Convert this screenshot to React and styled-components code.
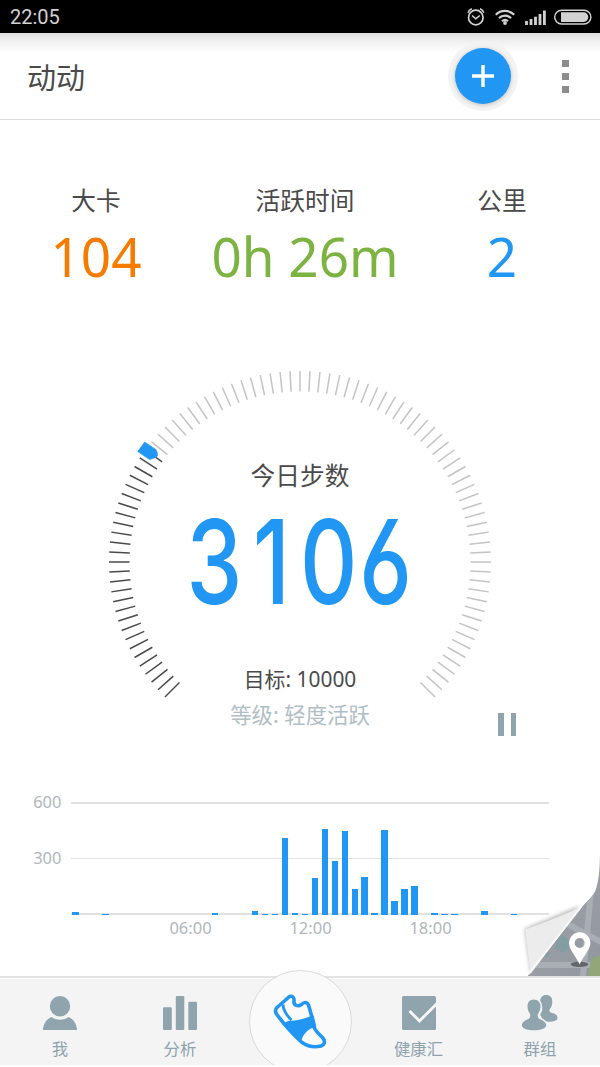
import React from 'react'
import styled, { createGlobalStyle } from 'styled-components'

const GlobalStyle = createGlobalStyle`
  * {
    box-sizing: border-box;
  }
  body {
    margin: 0;
    background-color: #fff;
    font-family: 'Noto Sans', 'Noto Sans CJK SC', sans-serif;
    color: #4a4a4a;
  }
`

/* styled-components */
const Screen = styled.div`
  position: relative;
  display: flex;
  flex-direction: column;
  width: 600px;
  height: 1067px;
  overflow: hidden;
  background-color: #fff;
`
const StatusBar = styled.div`
  display: flex;
  align-items: center;
  justify-content: space-between;
  height: 33px;
  padding: 1px 8px 0 10px;
  background-color: #000;
  color: #d2d2d2;
  font-family: Roboto, sans-serif;
  font-size: 20px;
  line-height: 32px;
`
const Header = styled.header`
  display: flex;
  align-items: center;
  height: 87px;
  padding: 0 31.5px 0 27px;
  border-bottom: 1px solid #dcdcdc;
  background: linear-gradient(#dedede, #f0f0f0 8px, #fff 20px);
`
const Title = styled.h1`
  flex: 1;
  margin: 0;
  padding-top: 4px;
  font-size: 29px;
  font-weight: 400;
  line-height: 40px;
`
const AddButton = styled.button`
  display: flex;
  align-items: center;
  justify-content: center;
  width: 56px;
  height: 56px;
  margin-right: 50.5px;
  padding: 0;
  border: 0;
  border-radius: 50%;
  background-color: #2196f3;
  box-shadow: 0 1px 4px 0 rgba(0, 0, 0, 0.22), 0 0 0 7px #f3f3f3;
`
const MenuButton = styled.div`
  display: flex;
  flex-direction: column;
  gap: 6px;
  padding-top: 1px;
`
const MenuDot = styled.span`
  width: 7px;
  height: 7px;
  background-color: #8c8c8c;
`
const Main = styled.main`
  display: flex;
  flex-direction: column;
  height: 856px;
`
const Stats = styled.section`
  display: grid;
  grid-template-columns: 192px 226px 168px;
  height: 250px;
  padding-top: 63px;
  text-align: center;
`
const StatLabel = styled.div`
  font-size: 24.7px;
  line-height: 36px;
`
const StatValue = styled.div`
  color: ${(props) => props.$color};
  font-size: 55.5px;
  line-height: 74px;
  transform: scaleX(0.955);
`
const Dial = styled.section`
  display: grid;
  height: 370px;
  justify-items: center;

  > * {
    grid-area: 1 / 1;
  }
`
const DialText = styled.div`
  display: flex;
  flex-direction: column;
  align-items: center;
  padding-top: 88px;
`
const DialTitle = styled.div`
  font-size: 24.7px;
  line-height: 36px;
`
const Steps = styled.div`
  display: grid;
  grid-template-columns: repeat(4, 75px);
  height: 150px;
  margin-top: -8px;
  color: #2196f3;
  font-family: Inter, Roboto, sans-serif;
  font-size: 117px;
  font-weight: 500;
  font-feature-settings: 'cv03';
  line-height: 151px;
  text-align: center;
  transform: scaleX(0.76);
`
const Goal = styled.div`
  margin-top: 25px;
  font-size: 20.9px;
  line-height: 36px;
`
const Level = styled.div`
  color: #b0bec5;
  font-size: 21.4px;
  line-height: 36px;
`
const PauseButton = styled.div`
  display: flex;
  gap: 7px;
  align-self: end;
  justify-self: end;
  margin: 0 84px 4px 0;
`
const PauseBar = styled.span`
  width: 5.5px;
  height: 23px;
  background-color: #90a4ae;
`
const Chart = styled.section`
  padding-top: 61px;
`
const ChartBody = styled.div`
  display: flex;
`
const AxisLabel = styled.span`
  color: #b0b7bb;
  font-size: 16.5px;
  line-height: 24px;
`
const YAxis = styled.div`
  display: flex;
  flex-direction: column;
  gap: 32px;
  width: 71px;
  height: 114px;
  padding-right: 9.5px;
  margin-top: -11px;
  text-align: right;
`
const Plot = styled.div`
  display: grid;
  width: 478px;
  height: 114px;

  > * {
    grid-area: 1 / 1;
    min-width: 0;
  }
`
const GridLines = styled.div`
  display: flex;
  flex-direction: column;
  justify-content: space-between;
  padding-top: 1px;
`
const GridLine = styled.span`
  height: ${(props) => props.$size}px;
  background-color: #e1e1e1;
`
const Bars = styled.div`
  display: flex;
  align-items: flex-end;
  padding-left: 1.4px;
`
const Bar = styled.span`
  flex: none;
  width: 6.4px;
  margin-right: 3.58px;
  background-color: #2196f3;
`
const XAxis = styled.div`
  display: flex;
  padding-left: 130.5px;
  margin-top: 1px;

  span {
    width: 120px;
    text-align: center;
  }
`
const MapCorner = styled.svg`
  position: absolute;
  right: 0;
  top: 840px;
`
const TabBar = styled.nav`
  display: grid;
  grid-template-columns: repeat(5, 1fr);
  height: 89px;
  border-top: 2px solid #e3e3e3;
  background-color: #f4f4f4;
  box-shadow: inset 0 1px 0 #fdfdfd;
`
const Tab = styled.div`
  display: flex;
  flex-direction: column;
  align-items: center;
  gap: 6px;
  padding-top: 18px;
  padding-right: ${(props) => props.$shift || 0}px;
  color: #8fa3ad;
  font-size: 16.4px;
  line-height: 26px;
`
const CenterTab = styled.div`
  height: 95px;
  margin-top: -8px;
  justify-self: center;
  overflow: hidden;
`
const ShoeButton = styled.div`
  width: 103px;
  height: 103px;
  border: 1px solid #d9d9d9;
  border-radius: 50%;
  background-color: #fafafa;
`

const stats = [
  { label: '大卡', value: '104', color: '#f57c00' },
  { label: '活跃时间', value: '0h 26m', color: '#7cb342' },
  { label: '公里', value: '2', color: '#2196f3' },
]

/* steps for every half hour of the day */
const steps = [
  16, 0, 0, 6, 0, 0, 0, 0, 0, 0, 0, 0,
  0, 0, 10, 0, 0, 0, 24, 6, 6, 415, 13, 8,
  200, 462, 291, 454, 138, 203, 11, 458, 74, 138, 157, 0,
  10, 6, 6, 0, 0, 24, 0, 0, 8, 0, 0, 0,
]

const total = '3106'

const ticks = Array.from({ length: 91 }, (_, i) => i)

function StatusIcons() {
  return (
    <svg width="126" height="33" viewBox="466 0 126 33" fill="none" stroke="#d2d2d2">
      <circle cx="475.8" cy="16.5" r="7.3" strokeWidth="1.7" />
      <path d="M472 14.500l3.800 3.300 4-3.300M468 11.800c.6-2 2-3.300 3.800-4M483.800 11.800c-.6-2-2-3.300-3.800-4" strokeWidth="1.6" />
      <path d="M495.800 13.700a13.200 13.200 0 0 1 18.400 0M499 17.100a8.600 8.600 0 0 1 12 0M502 20.200a4.500 4.500 0 0 1 6 0" strokeWidth="2.200" />
      <circle cx="505" cy="22" r="1.900" fill="#d2d2d2" stroke="none" />
      <path d="M526.500 24v-4M531 24v-6M535.500 24v-8.300M540 24V13M544.400 24V9.500" strokeWidth="2.800" />
      <rect x="554.700" y="9.200" width="36.200" height="13.800" rx="6.900" strokeWidth="1.400" />
      <path d="M561 11.300h22.500a4.800 4.800 0 0 1 0 9.600H561z" fill="#d2d2d2" stroke="none" />
    </svg>
  )
}

function Gauge() {
  return (
    <svg width="384" height="330" viewBox="-192 -192 384 330">
      {ticks.map((i) => (
        <line
          key={i}
          x1="170.5"
          x2="191"
          y1="0"
          y2="0"
          stroke={i > 27 ? '#c4c4c4' : '#4a4a4a'}
          strokeWidth="1.5"
          transform={`rotate(${135 + i * 3})`}
        />
      ))}
      <path
        d="M-155.300-120l10.800 7.200c1.500 1.500 2 4 2 6.300l-1.500 2-6.500 2-11.800-7.900z"
        fill="#2196f3"
        stroke="#2196f3"
        strokeWidth=".6"
      />
    </svg>
  )
}

function MapCurl() {
  return (
    <MapCorner width="80" height="136" viewBox="520 840 80 136">
      <defs>
        <clipPath id="map">
          <path d="M600 848c0 16-.5 30-4 41-2 7-9 12-15 19L527.700 976H600z" />
        </clipPath>
        <linearGradient id="mapShade" x1="0" y1="0" x2="1" y2="1">
          <stop offset="0" stopColor="#a4a7aa" />
          <stop offset="1" stopColor="#92969f" />
        </linearGradient>
        <filter id="soft" x="-20%" y="-20%" width="140%" height="140%">
          <feGaussianBlur stdDeviation="2" />
        </filter>
      </defs>
      <path d="M580 906l-55 23 6 45z" fill="#000" opacity=".3" filter="url(#soft)" />
      <g clipPath="url(#map)">
        <rect x="520" y="840" width="80" height="136" fill="url(#mapShade)" />
        <path d="M520 965h80M592 880l-9 96M560 920l45 24" stroke="#a9adb4" strokeWidth="6" fill="none" />
        <path d="M556 942l6-7 8 5-2 10-5 3-8-4zM542 954l9-2-4 6z" fill="#839da2" />
        <path d="M588 976l3-17 9-4v21z" fill="#92a679" />
      </g>
      <path d="M581 907c-18 8-37 16-55.700 22.500L530.500 974z" fill="#ececec" />
      <path d="M581 907L528.500 974" stroke="#fafafa" strokeWidth="2" />
      <ellipse cx="579.500" cy="964.300" rx="8.800" ry="2.600" fill="#62666a" />
      <path
        d="M579.700 932.300a10.700 10.700 0 0 0-10.700 10.700c0 6.500 6.500 12.500 10.600 21.500 4.100-9 10.800-15 10.800-21.500a10.700 10.700 0 0 0-10.700-10.700zm0 5.700a5 5 0 1 1 0 10 5 5 0 0 1 0-10z"
        fill="#fff"
        fillRule="evenodd"
      />
    </MapCorner>
  )
}

function MeIcon() {
  return (
    <svg width="34" height="34" fill="#90a4ae">
      <circle cx="17" cy="10.300" r="10.200" />
      <path d="M0 34c0-5.500 3.500-11 8.500-13 5 3.600 12 3.600 17 0 5 2 8.500 7.500 8.500 13z" />
    </svg>
  )
}

function AnalysisIcon() {
  return (
    <svg width="34" height="34" fill="#90a4ae">
      <rect y="11.300" width="8.800" height="22.700" rx="1" />
      <rect x="12.800" width="8.500" height="34" rx="1" />
      <rect x="25.300" y="5.800" width="8.700" height="28.200" rx="1" />
    </svg>
  )
}

function HealthIcon() {
  return (
    <svg width="34" height="34">
      <rect width="34" height="34" rx="1.500" fill="#90a4ae" />
      <path d="M7.500 15l10 10L35 7.500" fill="none" stroke="#f8f8f8" strokeWidth="2.800" />
    </svg>
  )
}

function GroupIcon() {
  return (
    <svg width="36" height="34" viewBox="522 996 36 34" overflow="visible">
      <path
        d="M546.200 995c-4 0-6.200 3-6 6.500.1 2.300 1 4 2 5.300v3.200c0 2-2 3-2 5l4 6.300c6 1 13.300.200 13.300-3.300 0-3.500-3-4.300-6.700-5.500-1.700-.600-2-2.500-.500-4 1.500-2 2-4.500 2-7 0-4-2-6.500-6.100-6.500z"
        fill="#90a4ae"
      />
      <path
        d="M533.800 999.500c-4 0-6.500 3-6.300 7 .1 3 1 5.200 2.300 7 1 2 .500 4.500-1.500 5.500-3 1.300-6.500 3.300-6.500 6.300 0 3 5.500 5 12.200 5s12.200-2 12.200-5-3.500-5-6.500-6.300c-2-1-2.500-3.500-1.500-5.500 1.300-1.800 2.200-4 2.300-7 .2-4-2.700-7-6.700-7z"
        fill="#90a4ae"
        stroke="#f4f4f4"
        strokeWidth="3"
        paintOrder="stroke"
      />
    </svg>
  )
}

function ShoeIcon() {
  return (
    <svg width="101" height="101" viewBox="249.500 971 101 101" fill="none" stroke="#2196f3" strokeWidth="3.600" strokeLinejoin="round">
      <path d="M289 996.500L276.500 1007.500c-2 2-2 4-.500 6.500 7 9.500 16 20 25.500 28.500 6 4 13 5 19 3.500 4-1.500 4.500-5 1.500-8.500-3-3-7-6-8.500-10.500-1.500-7-3-14.500-5.500-22-1.500-3.500-4.500-3-7-.500-3.500 2.500-8 1-7.500-3 .500-4-1.500-6-4.500-5z" />
      <path d="M282.500 1004.500c0 5 4 11.500 8.500 15.500" strokeWidth="2.800" />
      <path d="M284.500 1023.500l4-2c8 .5 17-2.500 24-5.500l2.500 10.500c-7 1-12 5-15 13.500z" fill="#2196f3" strokeWidth="1.500" />
    </svg>
  )
}

export default function App() {
  return (
    <Screen>
      <GlobalStyle />
      <StatusBar>
        <span>22:05</span>
        <StatusIcons />
      </StatusBar>
      <Header>
        <Title>动动</Title>
        <AddButton aria-label="add">
          <svg width="22" height="22">
            <path d="M11 0v22M0 11h22" stroke="#fff" strokeWidth="3.400" />
          </svg>
        </AddButton>
        <MenuButton>
          <MenuDot />
          <MenuDot />
          <MenuDot />
        </MenuButton>
      </Header>

      <Main>
        <Stats>
          {stats.map((stat) => (
            <div key={stat.label}>
              <StatLabel>{stat.label}</StatLabel>
              <StatValue $color={stat.color}>{stat.value}</StatValue>
            </div>
          ))}
        </Stats>

        <Dial>
          <Gauge />
          <DialText>
            <DialTitle>今日步数</DialTitle>
            <Steps>
              {total.split('').map((digit, i) => (
                <span key={i}>{digit}</span>
              ))}
            </Steps>
            <Goal>目标: 10000</Goal>
            <Level>等级: 轻度活跃</Level>
          </DialText>
          <PauseButton>
            <PauseBar />
            <PauseBar />
          </PauseButton>
        </Dial>

        <Chart>
          <ChartBody>
            <YAxis>
              <AxisLabel>600</AxisLabel>
              <AxisLabel>300</AxisLabel>
            </YAxis>
            <Plot>
              <GridLines>
                <GridLine $size={2} />
                <GridLine $size={1} />
                <GridLine $size={2} />
              </GridLines>
              <Bars>
                {steps.map((count, i) => (
                  <Bar key={i} style={{ height: count * 0.186 }} />
                ))}
              </Bars>
            </Plot>
          </ChartBody>
          <XAxis>
            <AxisLabel>06:00</AxisLabel>
            <AxisLabel>12:00</AxisLabel>
            <AxisLabel>18:00</AxisLabel>
          </XAxis>
        </Chart>
      </Main>
      <MapCurl />

      <TabBar>
        <Tab>
          <MeIcon />
          我
        </Tab>
        <Tab>
          <AnalysisIcon />
          分析
        </Tab>
        <CenterTab>
          <ShoeButton>
            <ShoeIcon />
          </ShoeButton>
        </CenterTab>
        <Tab $shift={3}>
          <HealthIcon />
          健康汇
        </Tab>
        <Tab>
          <GroupIcon />
          群组
        </Tab>
      </TabBar>
    </Screen>
  )
}
